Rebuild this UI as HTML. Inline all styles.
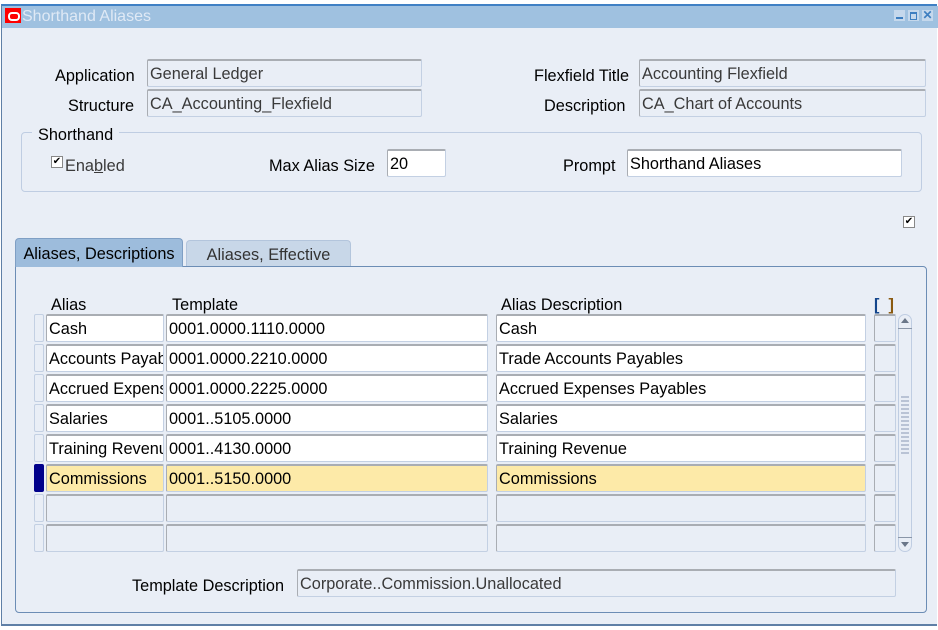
<!DOCTYPE html>
<html><head><style>
body{margin:0;width:938px;height:630px;background:#fff;font-family:"Liberation Sans",Arial,sans-serif;font-size:16.3px;position:relative;overflow:hidden}
.a{position:absolute;white-space:nowrap}
.win{position:absolute;left:1px;top:4px;width:936px;height:622px;background:#e9eef6;border-left:1px solid #5f7fa6;border-bottom:2px solid #5f7fa6;border-top:2px solid #3f80c4;box-sizing:border-box}
.title{position:absolute;left:0;top:0;width:936px;height:22px;background:#9fc1e0}
.lbl{position:absolute;white-space:nowrap;color:#000;text-align:right}
.f{position:absolute;box-sizing:border-box;border:1px solid #c3d0e3;border-top:2px solid #a9adb3;border-left:1px solid #a9adb3;border-radius:2px;background:#e9eef6;color:#3a3a3a;padding:1px 0 0 2px;line-height:25px;overflow:hidden;white-space:nowrap}
.w{background:#fff;color:#000}
.y{background:#fdeaa8;color:#000}
.ind{position:absolute;left:34px;width:10px;height:28px;box-sizing:border-box;border:1px solid #c3d0e3;border-radius:2px;background:#e9eef6}
</style></head><body>
<div class="win">
 <div class="title"></div>
 <div class="a" style="left:3px;top:2px;width:16px;height:15px;background:#f00"></div>
 <div class="a" style="left:6px;top:6px;width:8px;height:5px;border:2px solid #fff;border-radius:4px"></div>
 <div class="a" style="left:20px;top:2px;color:#dfe9f5;font-size:16px">Shorthand Aliases</div>
 <div class="a" style="left:892px;top:4px;width:11px;height:11px;background:#c5d8ec"><div class="a" style="left:2px;top:7px;width:7px;height:2px;background:#3d7ec0"></div></div>
 <div class="a" style="left:906px;top:4px;width:11px;height:11px;background:#c5d8ec"><div class="a" style="left:2px;top:2px;width:5px;height:5px;border:1px solid #3d7ec0;border-top-width:2px"></div></div>
 <div class="a" style="left:920px;top:4px;width:11px;height:11px;background:#c5d8ec;color:#3d7ec0;font-size:12px;line-height:11px;text-align:center;font-weight:bold">✕</div>
</div>

<div class="lbl" style="left:55px;top:67px">Application</div>
<div class="f" style="left:147px;top:59px;width:275px;height:28px">General Ledger</div>
<div class="lbl" style="left:68px;top:97px">Structure</div>
<div class="f" style="left:147px;top:89px;width:275px;height:28px">CA_Accounting_Flexfield</div>
<div class="lbl" style="left:534px;top:67px">Flexfield Title</div>
<div class="f" style="left:639px;top:59px;width:287px;height:28px">Accounting Flexfield</div>
<div class="lbl" style="left:544px;top:97px">Description</div>
<div class="f" style="left:639px;top:89px;width:287px;height:28px">CA_Chart of Accounts</div>

<div class="a" style="left:21px;top:132px;width:901px;height:60px;box-sizing:border-box;border:1px solid #bfcde2;border-radius:4px"></div>
<div class="a" style="left:32px;top:126px;background:#e9eef6;padding:0 6px">Shorthand</div>
<div class="a" style="left:51px;top:156px;width:10px;height:10px;border:1px solid #888;background:#fff;font-size:10px;line-height:10px;text-align:center">✔</div>
<div class="a" style="left:65px;top:157px;color:#3a3a3a">Ena<u>b</u>led</div>
<div class="lbl" style="left:269px;top:157px">Max Alias Size</div>
<div class="f w" style="left:387px;top:149px;width:59px;height:28px">20</div>
<div class="lbl" style="left:563px;top:157px">Prompt</div>
<div class="f w" style="left:627px;top:149px;width:275px;height:28px">Shorthand Aliases</div>

<div class="a" style="left:903px;top:216px;width:10px;height:10px;border:1px solid #888;background:#fff;font-size:10px;line-height:10px;text-align:center">✔</div>

<div class="a" style="left:15px;top:266px;width:912px;height:347px;box-sizing:border-box;border:1px solid #6c8db5;border-radius:0 4px 4px 4px"></div>
<div class="a" style="left:15px;top:238px;width:168px;height:29px;background:#9dbcdc;border:1px solid #7f9fc4;border-bottom:none;border-radius:4px 4px 0 0;box-sizing:border-box;text-align:center;line-height:31px">Aliases, Descriptions</div>
<div class="a" style="left:186px;top:240px;width:165px;height:26px;background:#c8d7e8;border:1px solid #b3c5dc;border-bottom:none;border-radius:4px 4px 0 0;box-sizing:border-box;text-align:center;line-height:28px;color:#333">Aliases, Effective</div>

<div class="a" style="left:51px;top:296px">Alias</div>
<div class="a" style="left:172px;top:296px">Template</div>
<div class="a" style="left:501px;top:296px">Alias Description</div>
<div class="a" style="left:874px;top:296px;font-weight:bold;color:#14468c">[&nbsp;&nbsp;<span style="color:#8a5a10">]</span></div>

<div class="ind" style="top:314px"></div><div class="f w" style="left:46px;top:314px;width:118px;height:28px">Cash</div><div class="f w" style="left:166px;top:314px;width:322px;height:28px">0001.0000.1110.0000</div><div class="f w" style="left:496px;top:314px;width:370px;height:28px">Cash</div><div class="f" style="left:874px;top:314px;width:22px;height:28px"></div>
<div class="ind" style="top:344px"></div><div class="f w" style="left:46px;top:344px;width:118px;height:28px">Accounts Payables</div><div class="f w" style="left:166px;top:344px;width:322px;height:28px">0001.0000.2210.0000</div><div class="f w" style="left:496px;top:344px;width:370px;height:28px">Trade Accounts Payables</div><div class="f" style="left:874px;top:344px;width:22px;height:28px"></div>
<div class="ind" style="top:374px"></div><div class="f w" style="left:46px;top:374px;width:118px;height:28px">Accrued Expenses</div><div class="f w" style="left:166px;top:374px;width:322px;height:28px">0001.0000.2225.0000</div><div class="f w" style="left:496px;top:374px;width:370px;height:28px">Accrued Expenses Payables</div><div class="f" style="left:874px;top:374px;width:22px;height:28px"></div>
<div class="ind" style="top:404px"></div><div class="f w" style="left:46px;top:404px;width:118px;height:28px">Salaries</div><div class="f w" style="left:166px;top:404px;width:322px;height:28px">0001..5105.0000</div><div class="f w" style="left:496px;top:404px;width:370px;height:28px">Salaries</div><div class="f" style="left:874px;top:404px;width:22px;height:28px"></div>
<div class="ind" style="top:434px"></div><div class="f w" style="left:46px;top:434px;width:118px;height:28px">Training Revenue</div><div class="f w" style="left:166px;top:434px;width:322px;height:28px">0001..4130.0000</div><div class="f w" style="left:496px;top:434px;width:370px;height:28px">Training Revenue</div><div class="f" style="left:874px;top:434px;width:22px;height:28px"></div>
<div class="ind" style="top:464px;background:#00008a;border-color:#00008a"></div><div class="f y" style="left:46px;top:464px;width:118px;height:28px">Commissions</div><div class="f y" style="left:166px;top:464px;width:322px;height:28px">0001..5150.0000</div><div class="f y" style="left:496px;top:464px;width:370px;height:28px">Commissions</div><div class="f" style="left:874px;top:464px;width:22px;height:28px"></div>
<div class="ind" style="top:494px"></div><div class="f" style="left:46px;top:494px;width:118px;height:28px"></div><div class="f" style="left:166px;top:494px;width:322px;height:28px"></div><div class="f" style="left:496px;top:494px;width:370px;height:28px"></div><div class="f" style="left:874px;top:494px;width:22px;height:28px"></div>
<div class="ind" style="top:524px"></div><div class="f" style="left:46px;top:524px;width:118px;height:28px"></div><div class="f" style="left:166px;top:524px;width:322px;height:28px"></div><div class="f" style="left:496px;top:524px;width:370px;height:28px"></div><div class="f" style="left:874px;top:524px;width:22px;height:28px"></div>

<div class="a" style="left:898px;top:314px;width:14px;height:238px;box-sizing:border-box;border:1px solid #bfcde2;border-radius:7px"></div>
<div class="a" style="left:898px;top:328px;width:14px;height:1px;background:#8a96a8"></div>
<div class="a" style="left:898px;top:537px;width:14px;height:1px;background:#8a96a8"></div>
<div class="a" style="left:901px;top:318px;width:0;height:0;border-left:4px solid transparent;border-right:4px solid transparent;border-bottom:5px solid #6b7789"></div>
<div class="a" style="left:901px;top:542px;width:0;height:0;border-left:4px solid transparent;border-right:4px solid transparent;border-top:5px solid #6b7789"></div>
<div class="a" style="left:901px;top:396px;width:8px;height:60px;background:repeating-linear-gradient(180deg,#9aa8c0 0 2px,transparent 2px 4px),repeating-linear-gradient(90deg,#e9eef6 0 2px,transparent 2px 4px);opacity:.6"></div>

<div class="lbl" style="left:132px;top:577px">Template Description</div>
<div class="f" style="left:297px;top:569px;width:599px;height:28px">Corporate..Commission.Unallocated</div>
</body></html>
